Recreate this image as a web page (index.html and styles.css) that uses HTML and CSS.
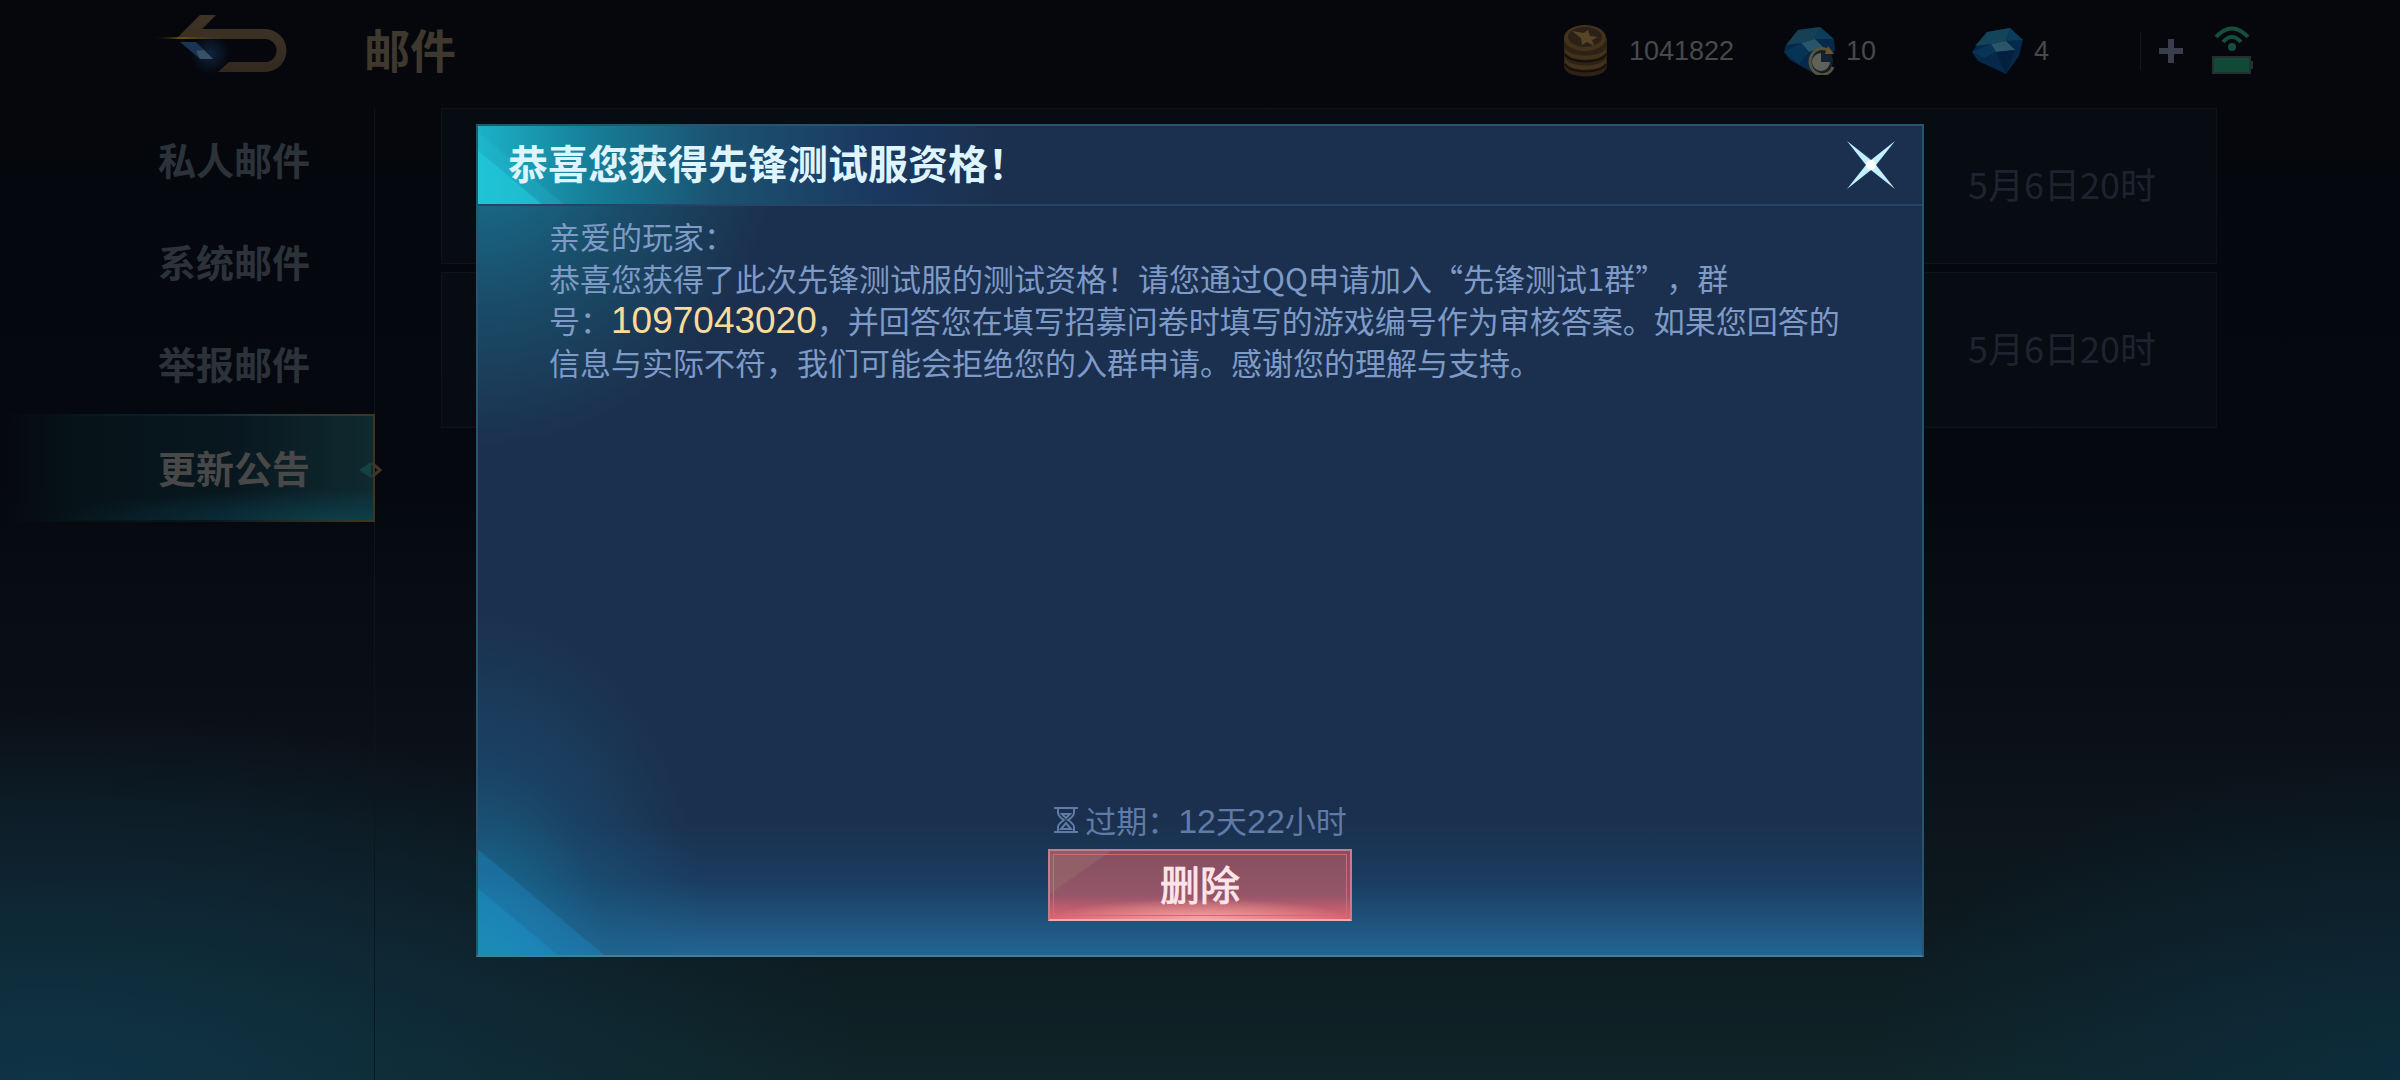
FILE: index.html
```html
<!DOCTYPE html>
<html lang="zh-CN">
<head>
  <meta charset="UTF-8">
  <meta name="viewport" content="width=device-width, initial-scale=1.0">
  <title>邮件</title>
  <link rel="stylesheet" href="styles.css">
</head>
<body>
  <header class="topbar">
    <button class="back" type="button" aria-label="返回">
      <svg width="136" height="68" viewBox="0 0 136 68">
        <defs>
          <linearGradient id="gold" x1="0" y1="0" x2="0" y2="1">
            <stop offset="0" stop-color="#3f3326"/>
            <stop offset="1" stop-color="#33291f"/>
          </linearGradient>
          <linearGradient id="flare" x1="0" y1="0" x2="1" y2="0">
            <stop offset="0" stop-color="#6b5010" stop-opacity="0"/>
            <stop offset=".4" stop-color="#6b5010"/>
            <stop offset="1" stop-color="#6b5010" stop-opacity="0"/>
          </linearGradient>
          <radialGradient id="blueGlow">
            <stop offset="0" stop-color="#16365f" stop-opacity=".6"/>
            <stop offset="1" stop-color="#16365f" stop-opacity="0"/>
          </radialGradient>
        </defs>
        <circle cx="58" cy="43" r="20" fill="url(#blueGlow)"/>
        <path d="M25 27 L48 4 H64 L50 18 H113 A21 21 0 0 1 113 61 H66 L77 51 H113 A11 11 0 0 0 113 28 H25Z" fill="url(#gold)"/>
        <path d="M28 31 H44 L61 48 H48Z" fill="#1b3454"/>
        <path d="M44 40 L52 39 L61 48 H48Z" fill="#3a5165"/>
        <path d="M0 27 L27 26 L78 27 L27 28Z" fill="url(#flare)"/>
      </svg>
    </button>
    <h1>邮件</h1>
    <div class="wallet">
      <div class="currency coins">
        <svg width="55" height="52" viewBox="0 0 55 52">
          <path d="M0 13 V41 C0 55 43 55 43 41 V13Z" fill="#2e2214"/>
          <path d="M1 23 C5 33 38 33 42 23 V27 C38 37 5 37 1 27Z M1 33 C5 43 38 43 42 33 V37 C38 47 5 47 1 37Z" fill="#43331c"/>
          <path d="M1 29 C5 39 38 39 42 29 M1 39 C5 49 38 49 42 39" fill="none" stroke="#150f0a" stroke-width="2"/>
          <ellipse cx="21" cy="13" rx="21" ry="13" fill="#43331c"/>
          <ellipse cx="21" cy="12" rx="17" ry="10" fill="#2c2117"/>
          <path d="M8 6 L20 8 L24 5 L26 11 L34 12 L28 15 L30 21 L23 17 L18 20 L17 13Z" fill="#574526"/>
        </svg>
        <span>1041822</span>
      </div>
      <div class="currency vouchers">
        <svg width="52" height="48" viewBox="0 0 52 48">
          <path d="M2 18 L14 3 L36 0 L50 12 L51 23 L33 48 L6 33 L0 25Z" fill="#06284b"/>
          <path d="M2 18 L14 3 L36 0 L31 12 L17 16Z" fill="#164154"/>
          <path d="M36 0 L50 12 L31 12Z" fill="#0c3d5a"/>
          <path d="M17 16 L31 12 L39 20 L25 25Z" fill="#295569"/>
          <path d="M0 25 L17 16 L25 25 L15 37Z" fill="#073354"/>
          <circle cx="37" cy="34" r="12" fill="#12222f"/>
          <path d="M45 24 A12 13 0 1 0 49 40" fill="none" stroke="#59533c" stroke-width="3"/>
          <path d="M44 19 L50 27 L41 27Z" fill="#6b5526"/>
          <path d="M37 26 V35 H46 A9 9 0 1 1 37 26Z" fill="#60615a"/>
        </svg>
        <span>10</span>
      </div>
      <div class="currency gems">
        <svg width="52" height="48" viewBox="0 0 52 48">
          <path d="M0 25 L15 5 L38 1 L51 13 L47 29 L34 47 L6 34Z" fill="#06284b"/>
          <path d="M3 19 L15 5 L38 1 L34 14 L19 17Z" fill="#14445a"/>
          <path d="M38 1 L51 13 L34 14Z" fill="#0b3c58"/>
          <path d="M34 14 L43 23 L24 25 L19 17Z" fill="#2b5669"/>
          <path d="M0 25 L19 17 L24 25 L12 31Z" fill="#073457"/>
          <path d="M24 25 L43 23 L34 47Z" fill="#05203f"/>
        </svg>
        <span>4</span>
      </div>
      <button class="plus" type="button" aria-label="充值">
        <svg width="24" height="24" viewBox="0 0 24 24"><path d="M9 0 H15 V9 H24 V15 H15 V24 H9 V15 H0 V9 H9Z" fill="#3a3e4c"/></svg>
      </button>
      <svg class="status" width="42" height="50" viewBox="0 0 42 50">
        <path d="M4 11 Q20 -6 36 11" fill="none" stroke="#164d3c" stroke-width="4"/>
        <path d="M11 16 Q20 6 29 16" fill="none" stroke="#164d3c" stroke-width="4"/>
        <ellipse cx="20" cy="21" rx="4" ry="4" fill="#164d3c"/>
        <rect x="1" y="31" width="37" height="16" fill="#104a36" stroke="#24302f" stroke-width="2"/>
        <path d="M39 35 H41 V43 H39Z" fill="#24302f"/>
      </svg>
    </div>
  </header>

  <main class="content">
    <nav class="tabs">
      <a href="#private">私人邮件</a>
      <a href="#system">系统邮件</a>
      <a href="#report">举报邮件</a>
      <a href="#news" class="active">更新公告
        <svg class="pointer" width="24" height="16" viewBox="0 0 24 16">
          <path d="M0 8 L12 0 V16Z" fill="#164044"/>
          <path d="M13 1 L21 8 L13 15" fill="none" stroke="#3d3626" stroke-width="3"/>
        </svg>
      </a>
    </nav>
    <ul class="mails">
      <li><time>5月6日20时</time></li>
      <li><time>5月6日20时</time></li>
    </ul>
  </main>

  <div class="overlay">
    <section class="modal" role="dialog" aria-labelledby="mailTitle">
      <div class="modal-head">
        <h2 id="mailTitle">恭喜您获得先锋测试服资格！</h2>
        <button class="close" type="button" aria-label="关闭">
          <svg width="52" height="52" viewBox="0 0 52 52">
            <path d="M2 2 L27 20 L50 2 L32 26 L50 50 L26 32 L2 50 L20 26Z" fill="#1c6b93" opacity=".35"/>
            <path d="M2 2 L26 21 L50 2 L31 26 L50 50 L26 31 L2 50 L21 26Z" fill="#c3efff"/>
            <circle cx="26" cy="26" r="5" fill="#fff"/>
          </svg>
        </button>
      </div>
      <div class="message">
        <p>亲爱的玩家：</p>
        <p>恭喜您获得了此次先锋测试服的测试资格！请您通过QQ申请加入“先锋测试1群”，群<br>号：<span class="group">1097043020</span>，并回答您在填写招募问卷时填写的游戏编号作为审核答案。如果您回答的<br>信息与实际不符，我们可能会拒绝您的入群申请。感谢您的理解与支持。</p>
      </div>
      <div class="modal-foot">
        <p class="expire">
          <svg width="26" height="28" viewBox="0 0 26 28" fill="none" stroke="#5f7ba6" stroke-width="2">
            <path d="M1 2 H25 M1 26 H25"/>
            <path d="M5 3 V7 Q5 10 11 14 Q5 18 5 21 V25 M21 3 V7 Q21 10 15 14 Q21 18 21 21 V25"/>
            <path d="M9 8 H17 L13 12Z M8 23 L13 17 L18 23Z"/>
          </svg>
          <span>过期：<span class="num">12</span>天<span class="num">22</span>小时</span>
        </p>
        <button class="delete" type="button">删除</button>
      </div>
    </section>
  </div>
</body>
</html>
```

FILE: styles.css
```css
* {
  margin: 0;
  padding: 0;
  box-sizing: border-box;
}

body {
  min-height: 100vh;
  font-family: "Noto Sans CJK SC", sans-serif;
  text-spacing-trim: space-all;
  background:
    radial-gradient(ellipse 34% 34% at 2% 100%, rgba(15, 56, 78, 0.8), rgba(15, 52, 70, 0.5) 50%, transparent),
    radial-gradient(ellipse 22% 30% at 100% 100%, rgba(12, 48, 68, 0.7), transparent),
    linear-gradient(#05070c 0, #05080f 45%, #0b1119 70%, #0d1a20 86%, #0f2529 100%);
}

button {
  background: none;
  border: none;
  font-family: inherit;
  cursor: pointer;
}

svg {
  display: block;
  flex: none;
}

/* Top bar */
.topbar {
  display: flex;
  align-items: center;
  height: 108px;
  padding: 0 146px 6px 152px;
}

.back {
  margin: 0 76px 12px 0;
}

h1 {
  margin-bottom: 6px;
  font-size: 46px;
  line-height: 60px;
  color: #3f382e;
}

.wallet {
  display: flex;
  align-items: center;
  margin-left: auto;
}

.currency {
  display: flex;
  align-items: center;
  gap: 10px;
  font-family: "Liberation Sans", Arial, sans-serif;
  font-size: 27px;
  color: #48494b;
}

.coins {
  width: 220px;
}

.vouchers {
  width: 188px;
}

.gems {
  width: 168px;
}

.plus {
  display: flex;
  align-items: center;
  justify-content: center;
  width: 60px;
  height: 38px;
  margin-right: 12px;
  border-left: 1px solid #14171d;
}

/* Page content behind the letter */
.content {
  display: flex;
  gap: 66px;
  min-height: calc(100vh - 108px);
}

.tabs {
  flex: 0 0 375px;
  border-right: 1px solid #0c151c;
}

.tabs a {
  display: block;
  padding-left: 158px;
  font-size: 38px;
  font-weight: bold;
  line-height: 102px;
  color: #2c323a;
  text-decoration: none;
}

.tabs .active {
  position: relative;
  margin-right: -1px;
  padding-bottom: 2px;
  color: #484848;
  border: 2px solid;
  border-left: none;
  border-image: linear-gradient(90deg, transparent 55%, #3d3626) 2;
  background:
    radial-gradient(ellipse 75% 30% at 90% 100%, rgba(14, 78, 92, 0.6), transparent),
    linear-gradient(90deg, transparent, #061319 20%, #08161e 60%, #0f2a30);
}

.pointer {
  position: absolute;
  right: -10px;
  top: 46px;
}

.mails {
  flex: 1;
  margin-right: 183px;
  list-style: none;
}

.mails li {
  display: flex;
  align-items: center;
  justify-content: flex-end;
  height: 156px;
  margin-bottom: 8px;
  padding: 0 60px 6px 0;
  font-size: 36px;
  color: #1e242f;
  background: #070b12;
  border: 1px solid #0f1216;
}

/* Opened letter */
.overlay {
  position: fixed;
  inset: 0;
  display: grid;
  place-items: center;
}

.modal {
  width: min(1448px, 94%);
  border: 2px solid #28546f;
  border-bottom-color: #437f9b;
  background:
    linear-gradient(40deg, rgba(26, 150, 180, 0.5), rgba(30, 155, 210, 0.3) 50px, transparent 52px) 0 100% / 400px 400px no-repeat,
    linear-gradient(40deg, rgba(32, 145, 215, 0.3) 80px, transparent 82px) 0 100% / 400px 400px no-repeat,
    radial-gradient(ellipse 230px 340px at 0 100%, rgba(22, 130, 170, 0.8), rgba(24, 100, 140, 0.35) 55%, transparent),
    radial-gradient(ellipse 300px 320px at 0 0, #167b9c, rgba(24, 105, 130, 0.5) 55%, transparent),
    linear-gradient(transparent 84%, #1a3c60 91%, #226592),
    #1b304e;
}

.modal-head {
  display: flex;
  align-items: center;
  justify-content: space-between;
  height: 80px;
  padding: 0 25px 0 30px;
  border-bottom: 2px solid #264466;
  background:
    linear-gradient(40deg, rgba(34, 210, 225, 0.5) 40px, transparent 42px),
    linear-gradient(40deg, rgba(34, 200, 220, 0.2) 54px, transparent 56px),
    linear-gradient(90deg, #1bb2c8, #177f99 110px, #1b5272 240px, #1b3860 400px, #1b304e 520px);
}

h2 {
  margin-bottom: 6px;
  font-size: 40px;
  line-height: 60px;
  color: #def4ff;
}

.message {
  min-height: 593px;
  padding: 9px 71px 0;
  font-size: 31px;
  line-height: 42px;
  color: #7e9ac7;
}

.group {
  font-family: "Liberation Sans", Arial, sans-serif;
  font-size: 37px;
  line-height: 1;
  color: #fadb9c;
}

.modal-foot {
  display: flex;
  flex-direction: column;
  align-items: center;
  gap: 8px;
  padding-bottom: 34px;
}

.expire {
  display: flex;
  align-items: center;
  gap: 6px;
  font-size: 31px;
  line-height: 42px;
  color: #5f7ba6;
}

.num {
  font-family: "Liberation Sans", Arial, sans-serif;
  font-size: 34px;
  line-height: 1;
}

.delete {
  width: 304px;
  height: 72px;
  padding-bottom: 4px;
  font-size: 40px;
  color: #ffe4e9;
  -webkit-text-stroke: 1px #ffe4e9;
  border: 2px solid #c97a8c;
  border-bottom-color: #f3aab0;
  outline: 1px solid #d06a79;
  outline-offset: -6px;
  background:
    linear-gradient(145deg, rgba(150, 110, 105, 0.5) 34px, transparent 36px),
    radial-gradient(ellipse 50% 30% at 50% 100%, rgba(255, 180, 170, 0.8), transparent),
    linear-gradient(#854f60, #95566a 65%, #e0636f);
}
```
